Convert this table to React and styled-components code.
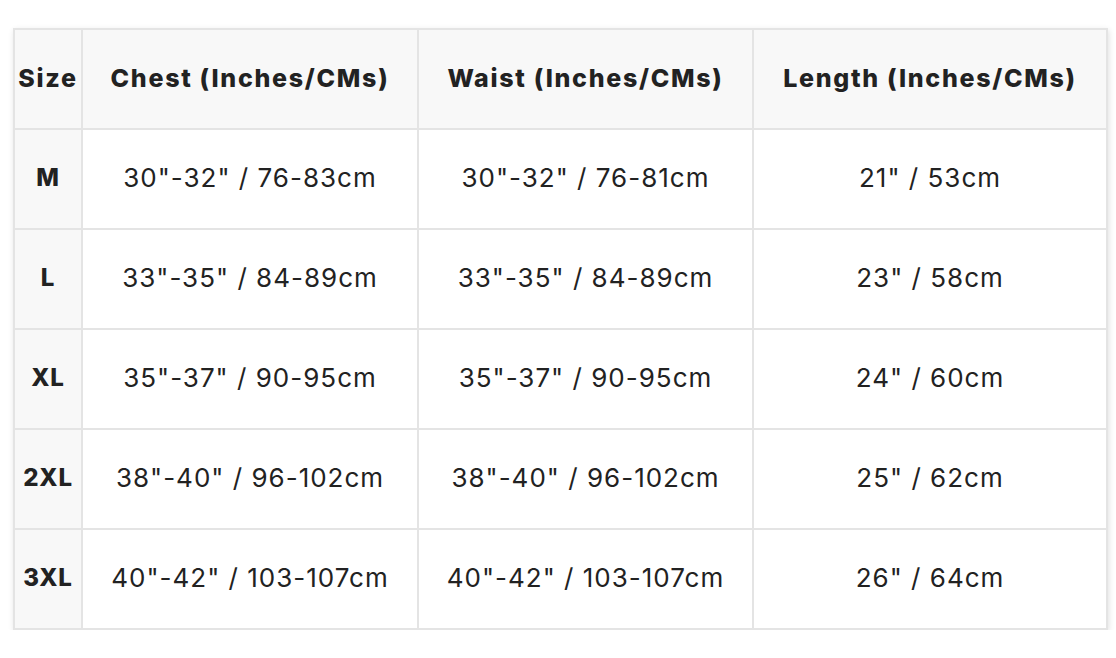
import styled, { createGlobalStyle } from 'styled-components';

const Global = createGlobalStyle`
    body {
        margin: 0;
        background: #fff;
        font-family: Inter, "Open Sans", sans-serif;
        color: #222;
    }
`;

const Page = styled.div`
    padding: 28px 10px 0 13px;
`;

const Table = styled.table`
    width: 1093px;
    border-collapse: collapse;
    box-shadow: 1px 2px 6px rgba(0, 0, 0, 0.12);
    table-layout: fixed;
`;

const Cell = styled.td`
    height: 95px;
    padding: 0 0 3px;
    border: 2px solid #e4e4e4;
    text-align: center;
    vertical-align: middle;
    white-space: nowrap;
    background: ${p => (p.$shaded ? '#f8f8f8' : '#fff')};
    font-weight: ${p => (p.$bold ? 800 : 400)};
    font-size: ${p => (p.$bold ? '24px' : '26px')};
    letter-spacing: ${p => (p.$bold ? '0.8px' : '1px')};
`;

const HeadCell = styled.th`
    height: 95px;
    padding: 0 0 3px;
    border: 2px solid #e4e4e4;
    background: #f8f8f8;
    font-size: 25px;
    font-weight: 800;
    text-align: center;
    white-space: nowrap;
    letter-spacing: 1.7px;
`;

const rows = [
    ['M', '30"-32" / 76-83cm', '30"-32" / 76-81cm', '21" / 53cm'],
    ['L', '33"-35" / 84-89cm', '33"-35" / 84-89cm', '23" / 58cm'],
    ['XL', '35"-37" / 90-95cm', '35"-37" / 90-95cm', '24" / 60cm'],
    ['2XL', '38"-40" / 96-102cm', '38"-40" / 96-102cm', '25" / 62cm'],
    ['3XL', '40"-42" / 103-107cm', '40"-42" / 103-107cm', '26" / 64cm'],
];

const App = () => (
    <>
        <Global />
        <Page>
            <Table>
                <colgroup>
                    <col style={{ width: 68 }} />
                    <col style={{ width: 336 }} />
                    <col style={{ width: 335 }} />
                    <col style={{ width: 354 }} />
                </colgroup>
                <thead>
                    <tr>
                        <HeadCell>Size</HeadCell>
                        <HeadCell>Chest (Inches/CMs)</HeadCell>
                        <HeadCell>Waist (Inches/CMs)</HeadCell>
                        <HeadCell>Length (Inches/CMs)</HeadCell>
                    </tr>
                </thead>
                <tbody>
                    {rows.map(r => (
                        <tr key={r[0]}>
                            <Cell $shaded $bold>{r[0]}</Cell>
                            <Cell>{r[1]}</Cell>
                            <Cell>{r[2]}</Cell>
                            <Cell>{r[3]}</Cell>
                        </tr>
                    ))}
                </tbody>
            </Table>
        </Page>
    </>
);

export default App;
